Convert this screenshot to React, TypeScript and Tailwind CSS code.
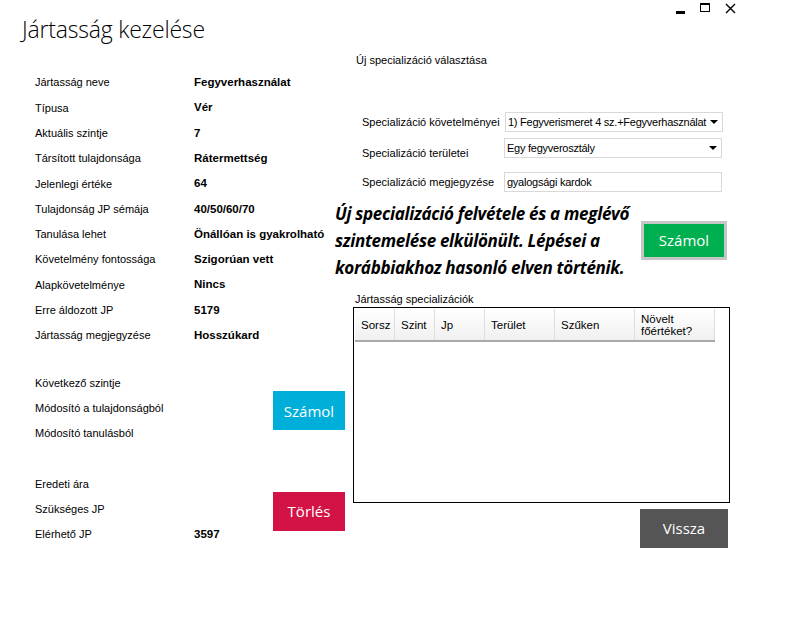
const fields: [string, string][] = [
  ["Jártasság neve", "Fegyverhasználat"],
  ["Típusa", "Vér"],
  ["Aktuális szintje", "7"],
  ["Társított tulajdonsága", "Rátermettség"],
  ["Jelenlegi értéke", "64"],
  ["Tulajdonság JP sémája", "40/50/60/70"],
  ["Tanulása lehet", "Önállóan is gyakrolható"],
  ["Követelmény fontossága", "Szigorúan vett"],
  ["Alapkövetelménye", "Nincs"],
  ["Erre áldozott JP", "5179"],
  ["Jártasság megjegyzése", "Hosszúkard"],
];

const columns: [string, number][] = [
  ["Sorsz", 40],
  ["Szint", 40],
  ["Jp", 50],
  ["Terület", 70],
  ["Szűken", 80],
  ["Növelt főértéket?", 80],
];

function Row({ label, value }: { label: string; value?: string }) {
  return (
    <div className="flex items-center h-[25.3px] whitespace-nowrap">
      <div className="w-[159px]">{label}</div>
      {value && <div className="font-bold text-[11.5px]">{value}</div>}
    </div>
  );
}

function Select({ text }: { text: string }) {
  return (
    <div className="flex items-center justify-between gap-[4px] h-[20px] w-[218px] border border-[#d9d9d9] bg-white pl-[2px] pr-[4px] whitespace-nowrap">
      <span className="text-[11px] tracking-[-0.25px]">{text}</span>
      <span className="shrink-0 w-0 h-0 border-l-[4px] border-r-[4px] border-t-[4px] border-l-transparent border-r-transparent border-t-black" />
    </div>
  );
}

function WindowControls() {
  return (
    <div className="absolute top-0 right-0 flex items-start gap-[15px] pr-[54px] pt-[3px]">
      <div className="w-[9px] h-[3px] bg-black mt-[8px]" />
      <div className="w-[10px] h-[9px] border border-black border-t-2" />
      <svg width="11" height="11" viewBox="0 0 11 11">
        <path d="M1 1 L10 10 M10 1 L1 10" stroke="#000" strokeWidth="1.4" />
      </svg>
    </div>
  );
}

export default function App() {
  return (
    <div className="relative w-[790px] h-[630px] bg-white text-black text-[11px] font-['Liberation_Sans',Arial,sans-serif]">
      <WindowControls />

      <div className="flex">
        {/* left column */}
        <div className="w-[345px] shrink-0">
          <h1 className="pl-[22px] pt-[14px] h-[56px] text-[23px] font-light leading-[30px] font-['Open_Sans',sans-serif] tracking-[-0.2px]">
            Jártasság kezelése
          </h1>

          <div className="pl-[35px] pt-[14px]">
            {fields.map(([l, v]) => (
              <Row key={l} label={l} value={v} />
            ))}
          </div>

          <div className="flex pl-[35px] mt-[22px]">
            <div className="w-[238px]">
              <Row label="Következő szintje" />
              <Row label="Módosító a tulajdonságból" />
              <Row label="Módosító tanulásból" />
            </div>
            <button className="mt-[21px] w-[72px] h-[39px] bg-[#00afd9] text-white text-[15px] font-['Open_Sans',sans-serif]">
              Számol
            </button>
          </div>

          <div className="flex pl-[35px] mt-[25px]">
            <div className="w-[238px]">
              <Row label="Eredeti ára" />
              <Row label="Szükséges JP" />
              <Row label="Elérhető JP" value="3597" />
            </div>
            <button className="mt-[21px] w-[72px] h-[39px] bg-[#d31245] text-white text-[15px] font-['Open_Sans',sans-serif]">
              Törlés
            </button>
          </div>
        </div>

        {/* right column */}
        <div className="flex-1 pt-[53px]">
          <div className="pl-[11px] h-[14px] leading-[14px]">Új specializáció választása</div>

          <div className="pt-[45px] pl-[17px] flex flex-col whitespace-nowrap">
            <div className="flex items-center h-[20px]">
              <div className="w-[143px]">Specializáció követelményei</div>
              <Select text="1) Fegyverismeret 4 sz.+Fegyverhasználat" />
            </div>
            <div className="flex items-center h-[20px] mt-[6px]">
              <div className="w-[142px] pt-[10px]">Specializáció területei</div>
              <Select text="Egy fegyverosztály" />
            </div>
            <div className="flex items-center h-[20px] mt-[14px]">
              <div className="w-[142px]">Specializáció megjegyzése</div>
              <div className="flex items-center h-[20px] w-[218px] border border-[#d9d9d9] pl-[2px] text-[11px] tracking-[-0.25px]">gyalogsági kardok</div>
            </div>
          </div>

          <div className="flex -ml-[10px] mt-[8px]">
            <p className="w-[306px] text-[17px] leading-[27px] font-bold italic font-['Open_Sans',sans-serif] tracking-[-0.3px]">
              Új specializáció felvétele és a meglévő szintemelése elkülönült. Lépései a korábbiakhoz hasonló elven történik.
            </p>
            <button className="mt-[21px] w-[86px] h-[39px] bg-[#00b050] border-[3px] border-[#c6c6c6] text-white text-[15px] font-['Open_Sans',sans-serif]">
              Számol
            </button>
          </div>

          <div className="pl-[10px] mt-[11px] h-[14px] leading-[14px]">Jártasság specializációk</div>

          <div className="ml-[8px] mt-[1px] w-[377px] h-[196px] border border-black p-px">
            <div className="flex h-[33px] bg-gradient-to-b from-white to-[#f0f0f0] border-b-2 border-[#a9a9a9] w-fit">
              {columns.map(([name, w]) => (
                <div
                  key={name}
                  style={{ width: w }}
                  className="flex items-center pl-[6px] border-r border-[#dedede] leading-[12px] text-[11.5px]"
                >
                  {name}
                </div>
              ))}
            </div>
          </div>

          <div className="flex justify-end w-[383px] mt-[6px]">
            <button className="w-[88px] h-[39px] bg-[#555555] text-white text-[15px] font-['Open_Sans',sans-serif]">
              Vissza
            </button>
          </div>
        </div>
      </div>
    </div>
  );
}
